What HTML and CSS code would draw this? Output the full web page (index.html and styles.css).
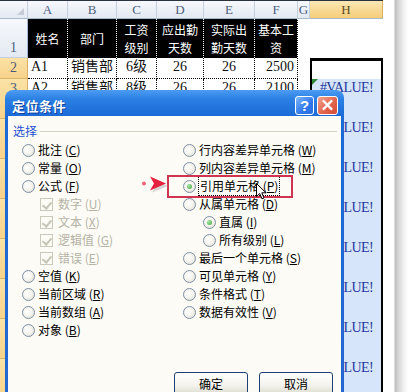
FILE: index.html
```html
<!DOCTYPE html>
<html>
<head>
<meta charset="utf-8">
<link rel="stylesheet" href="styles.css">
</head>
<body>
<div class="screen">
  <div class="sheet">
    <div class="hd corner"></div>
    <div class="hd">A</div><div class="hd">B</div><div class="hd">C</div><div class="hd">D</div><div class="hd">E</div><div class="hd">F</div><div class="hd">G</div><div class="hd sel">H</div>

    <div class="rh r1">1</div>
    <div class="th"><span>姓名</span></div><div class="th"><span>部门</span></div><div class="th"><span>工资</span><span>级别</span></div><div class="th"><span>应出勤</span><span>天数</span></div><div class="th"><span>实际出</span><span>勤天数</span></div><div class="th"><span>基本工</span><span>资</span></div><div class="blank"></div><div class="blank"></div>

    <div class="rh sel">2</div>
    <div class="td l">A1</div><div class="td l">销售部</div><div class="td c">6级</div><div class="td c">26</div><div class="td c">26</div><div class="td r">2500</div><div class="blank"></div><div class="hcell active"></div>

    <div class="rh sel">3</div>
    <div class="td l">A2</div><div class="td l">销售部</div><div class="td c">8级</div><div class="td c">26</div><div class="td c">26</div><div class="td r">2100</div><div class="blank"></div><div class="hcell err first">#VALUE!</div>

    <div class="rh sel"></div><div class="fill"></div><div class="hcell err">#VALUE!</div>
    <div class="rh sel"></div><div class="fill"></div><div class="hcell err">#VALUE!</div>
    <div class="rh sel"></div><div class="fill"></div><div class="hcell err">#VALUE!</div>
    <div class="rh sel"></div><div class="fill"></div><div class="hcell err">#VALUE!</div>
    <div class="rh sel"></div><div class="fill"></div><div class="hcell err">#VALUE!</div>
    <div class="rh sel"></div><div class="fill"></div><div class="hcell err">#VALUE!</div>
    <div class="rh sel"></div><div class="fill"></div><div class="hcell err">#VALUE!</div>
  </div>
  <div class="edge"></div>

  <div class="dialog">
    <div class="titlebar">
      <span class="title">定位条件</span>
      <div class="tbtns"><span class="tb help">?</span><span class="tb close">
        <svg viewBox="0 0 20 20" width="20" height="19"><path d="M6 5.5 L14 13.5 M14 5.5 L6 13.5" stroke="#fff" stroke-width="2.4" stroke-linecap="square"/></svg>
      </span></div>
    </div>
    <div class="body">
      <div class="legend"><span>选择</span><i class="rule"></i></div>
      <div class="opts">
        <div class="col">
          <div class="opt"><i class="radio"></i><span>批注 (<u>C</u>)</span></div>
          <div class="opt"><i class="radio"></i><span>常量 (<u>O</u>)</span></div>
          <div class="opt"><i class="radio"></i><span>公式 (<u>F</u>)</span></div>
          <div class="opt chk dis"><i class="check"></i><span>数字 (<u>U</u>)</span></div>
          <div class="opt chk dis"><i class="check"></i><span>文本 (<u>X</u>)</span></div>
          <div class="opt chk dis"><i class="check"></i><span>逻辑值 (<u>G</u>)</span></div>
          <div class="opt chk dis"><i class="check"></i><span>错误 (<u>E</u>)</span></div>
          <div class="opt"><i class="radio"></i><span>空值 (<u>K</u>)</span></div>
          <div class="opt"><i class="radio"></i><span>当前区域 (<u>R</u>)</span></div>
          <div class="opt"><i class="radio"></i><span>当前数组 (<u>A</u>)</span></div>
          <div class="opt"><i class="radio"></i><span>对象 (<u>B</u>)</span></div>
        </div>
        <div class="col">
          <div class="opt"><i class="radio"></i><span>行内容差异单元格 (<u>W</u>)</span></div>
          <div class="opt"><i class="radio"></i><span>列内容差异单元格 (<u>M</u>)</span></div>
          <div class="opt"><i class="radio on"></i><span class="focus">引用单元格 (<u>P</u>)</span></div>
          <div class="opt"><i class="radio"></i><span>从属单元格 (<u>D</u>)</span></div>
          <div class="opt sub"><i class="radio on"></i><span>直属 (<u>I</u>)</span></div>
          <div class="opt sub"><i class="radio"></i><span>所有级别 (<u>L</u>)</span></div>
          <div class="opt"><i class="radio"></i><span>最后一个单元格 (<u>S</u>)</span></div>
          <div class="opt"><i class="radio"></i><span>可见单元格 (<u>Y</u>)</span></div>
          <div class="opt"><i class="radio"></i><span>条件格式 (<u>T</u>)</span></div>
          <div class="opt"><i class="radio"></i><span>数据有效性 (<u>V</u>)</span></div>
        </div>
      </div>
      <div class="btns"><button class="btn">确定</button><button class="btn">取消</button></div>
    </div>
  </div>

  <div class="callout"></div>
  <svg class="pointer" viewBox="0 0 28 20" width="28" height="20">
    <path d="M11 4 L27 10.5 L11 17 L15 10.5 Z" fill="#b9b9b9" opacity="0.6" transform="translate(1,1.5)"/>
    <circle cx="4" cy="9.5" r="2" fill="#f0607a"/>
    <path d="M10 2.5 L26 9.5 L10 16.5 L14 9.5 Z" fill="#e6203f"/>
  </svg>
  <svg class="cursor" viewBox="0 0 12 18" width="12" height="18">
    <path d="M0.5 0.5 L0.5 13.5 L3.7 10.5 L6 15.8 L8 15 L5.8 9.8 L10 9.8 Z" fill="#fff" stroke="#000" stroke-width="1"/>
  </svg>
</div>
</body>
</html>
```

FILE: styles.css
```css
* { box-sizing: border-box; }
html, body { margin: 0; padding: 0; background: #fff; }
.screen {
  position: relative;
  width: 416px;
  height: 392px;
  overflow: hidden;
  display: flex;
}
.sheet {
  width: 383px;
  flex: none;
  display: grid;
  grid-template-columns: 28px 40px 49px 40px 47px 51px 43px 12px 73px;
  grid-template-rows: 18px 39px 21px repeat(8, 40px);
  border-top: 1px solid #2a3140;
  font-family: "Liberation Serif", "Noto Sans CJK SC", serif;
}
.hd {
  background: linear-gradient(#f6f8fc, #e3e9f2);
  border-right: 1px solid #c5d0df;
  border-bottom: 1px solid #a8b8cf;
  color: #4e5f80;
  font-size: 13px;
  display: flex;
  align-items: center;
  justify-content: center;
}
.hd.corner { position: relative; }
.hd.corner::after {
  content: "";
  position: absolute;
  right: 3px;
  bottom: 3px;
  border-left: 7px solid transparent;
  border-bottom: 7px solid #c6ccd6;
}
.hd.sel {
  background: linear-gradient(#fbe7b5, #f5cd79);
  color: #5b4a25;
  border-right: 1px solid #d9b160;
}
.rh {
  background: linear-gradient(#f6f8fc, #e3e9f2);
  border-right: 1px solid #a8b8cf;
  border-bottom: 1px solid #c5d0df;
  color: #4e5f80;
  font-size: 14px;
  display: flex;
  justify-content: center;
  align-items: flex-end;
  padding-bottom: 1px;
  grid-column: 1;
}
.rh.sel {
  background: linear-gradient(#fbe2a6, #f7d28a);
  border-bottom: 1px solid #dcb56a;
  border-right: 1px solid #d9b160;
  color: #4e5a78;
  align-items: flex-start;
  line-height: 20px;
}
.th {
  background: #000;
  color: #fff;
  font-family: "Noto Sans CJK SC", sans-serif;
  font-size: 12px;
  text-align: center;
  display: flex;
  flex-direction: column;
  align-items: center;
  justify-content: center;
  border-right: 1px dotted #fff;
}
.th span {
  display: block;
  line-height: 17.5px;
  height: 17.5px;
}
.blank { background: #fff; }
.td {
  background: #fff;
  border-right: 1px dotted #000;
  border-bottom: 1px dotted #000;
  font-size: 14px;
  line-height: 18px;
  color: #111;
  padding: 0 3px;
  white-space: nowrap;
  overflow: hidden;
}
.td.l { text-align: left; }
.td.c { text-align: center; }
.td.r { text-align: right; }
.fill {
  grid-column: 2 / 9;
  background: #fff;
}
.hcell {
  grid-column: 9;
  border-left: 2px solid #000;
  border-right: 2px solid #000;
}
.hcell.active {
  background: #fff;
  border-top: 3px solid #000;
}
.hcell.err {
  position: relative;
  background: #d6e5f9;
  color: #24399e;
  font-size: 14px;
  line-height: 18px;
  text-align: center;
  letter-spacing: -0.6px;
  padding-top: 0;
}
.hcell.first::before {
  content: "";
  position: absolute;
  left: 0;
  top: 0;
  border-top: 6px solid #2f8a3a;
  border-right: 6px solid transparent;
}
.edge {
  flex: 1;
  background: linear-gradient(to right, #fff 0, #fff 11px, #bdbdbd 12px, #dadada 16px, #f1f1f1 21px, #fff 25px);
}

/* dialog */
.dialog {
  position: absolute;
  left: 5px;
  top: 90px;
  width: 339px;
  height: 330px;
  padding: 0 3px 3px;
  border-radius: 8px 8px 0 0;
  background: linear-gradient(#4d9cf2 0, #2b80e4 9px, #1c6ad6 26px, #2466d0 100%);
  font-family: "Noto Sans CJK SC", sans-serif;
  font-size: 12px;
  z-index: 2;
}
.titlebar {
  height: 26px;
  display: flex;
  align-items: center;
  justify-content: space-between;
  padding: 4px 3px 0 4px;
}
.title {
  color: #fff;
  font-weight: bold;
  font-size: 13px;
  letter-spacing: 0.5px;
  text-shadow: 1px 1px 0 #10449e;
}
.tbtns { display: flex; gap: 3px; }
.tb {
  width: 19px;
  height: 19px;
  border: 1px solid #fff;
  border-radius: 3px;
  display: flex;
  align-items: center;
  justify-content: center;
  color: #fff;
  font-family: "Liberation Sans", sans-serif;
  font-weight: bold;
  font-size: 15px;
}
.tb.help { background: linear-gradient(135deg, #7fb6fb, #2f78ec 60%, #2a6ee0); }
.tb.close { width: 21px; background: linear-gradient(135deg, #f3a493, #e2664e 55%, #d44a35); }
.body {
  background: #fcfbf5;
  height: 301px;
  padding: 8px 4px 0 5px;
  color: #000;
}
.legend {
  display: flex;
  align-items: center;
  height: 14px;
  color: #1f4fd2;
  line-height: 14px;
}
.rule {
  flex: 1;
  height: 1px;
  background: #d6d3c4;
  margin-left: 3px;
}
.opts {
  display: grid;
  grid-template-columns: 161px 1fr;
  margin-top: 3px;
  padding-left: 9px;
}
.opt {
  height: 18px;
  display: flex;
  align-items: center;
  gap: 3px;
  white-space: nowrap;
}
.opt span { line-height: 16px; }
.opt u { text-decoration: underline; }
.opt.sub { padding-left: 20px; }
.opt.chk { padding-left: 18px; gap: 5px; }
.opt.dis { color: #b5b3a6; }
.radio {
  width: 13px;
  height: 13px;
  flex: none;
  border-radius: 50%;
  border: 1px solid #7d8fa6;
  background: radial-gradient(circle at 40% 40%, #fff 0, #f5f4ee 45%, #dcdacd 100%);
  position: relative;
}
.radio.on::after {
  content: "";
  position: absolute;
  left: 3px;
  top: 3px;
  width: 5px;
  height: 5px;
  border-radius: 50%;
  background: radial-gradient(circle at 35% 35%, #a5e6a0, #3ea33c);
}
.check {
  width: 13px;
  height: 13px;
  flex: none;
  border: 1px solid #cbc9bb;
  background: #fcfbf5;
  position: relative;
}
.check::after {
  content: "";
  position: absolute;
  left: 3px;
  top: 1px;
  width: 4px;
  height: 7px;
  border-right: 2px solid #c8c6b8;
  border-bottom: 2px solid #c8c6b8;
  transform: rotate(40deg);
}
.focus {
  outline: 1px dotted #000;
  outline-offset: 0;
  padding: 1px 1px;
}
.btns {
  display: flex;
  justify-content: flex-end;
  gap: 11px;
  margin-top: 33px;
  padding-right: 4px;
}
.btn {
  width: 74px;
  height: 23px;
  border: 1px solid #1e3f75;
  border-radius: 3px;
  background: linear-gradient(#ffffff, #f3f2ec 60%, #dedcd0);
  font-family: "Noto Sans CJK SC", sans-serif;
  font-size: 12px;
  color: #000;
  padding: 0;
}

/* annotations */
.callout {
  position: absolute;
  left: 167px;
  top: 175px;
  width: 126px;
  height: 23px;
  border: 2px solid #cf3450;
  z-index: 3;
}
.pointer {
  position: absolute;
  left: 140px;
  top: 174px;
  z-index: 3;
}
.cursor {
  position: absolute;
  left: 256px;
  top: 183px;
  z-index: 4;
}
```
